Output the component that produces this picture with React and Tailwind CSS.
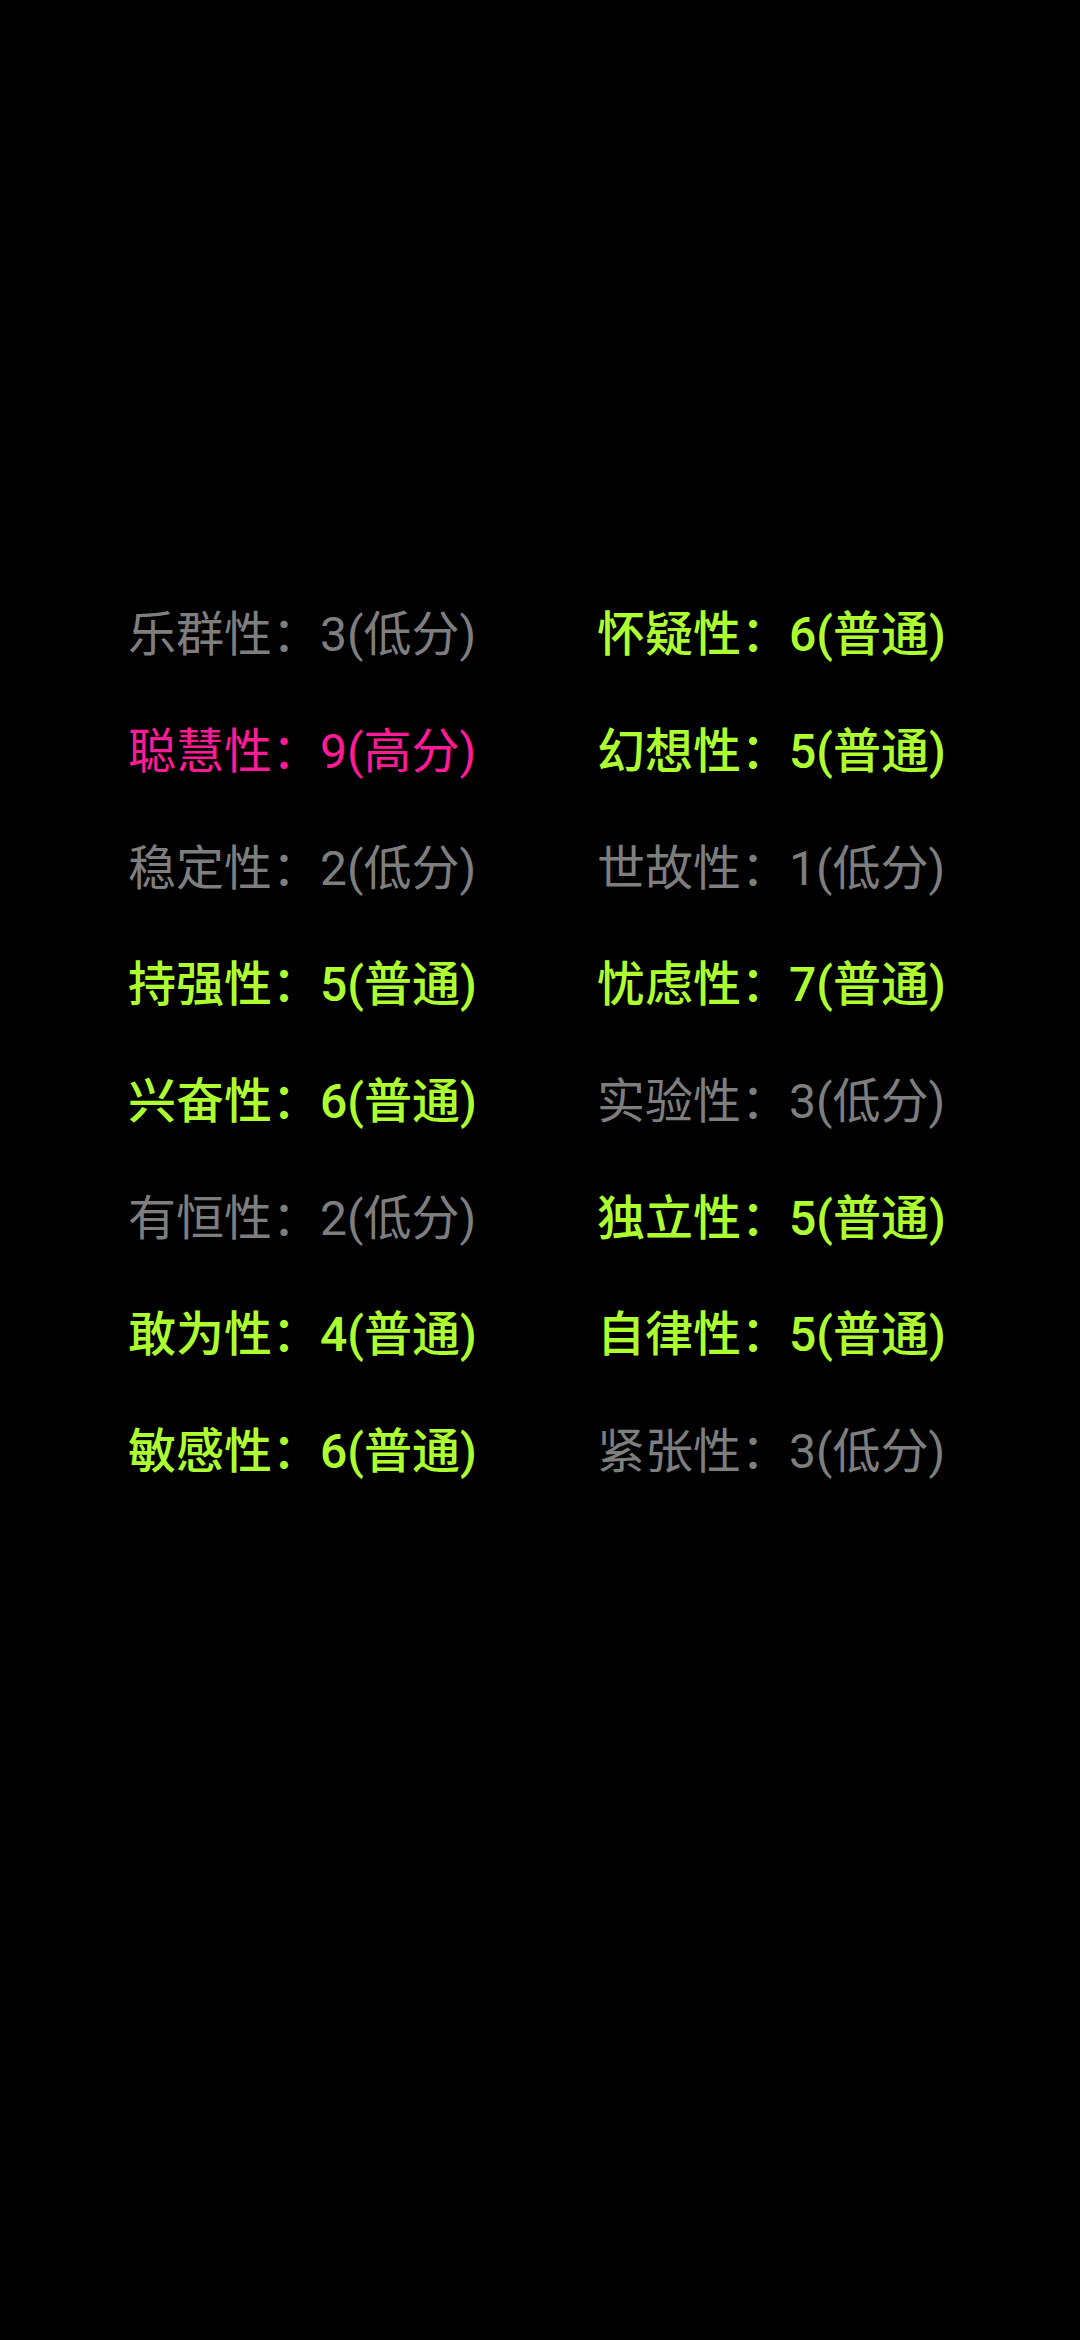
import React from 'react';

// trait scores, two columns
const traits = [
  { name: '乐群性', score: 3, level: '低分' },
  { name: '怀疑性', score: 6, level: '普通' },
  { name: '聪慧性', score: 9, level: '高分' },
  { name: '幻想性', score: 5, level: '普通' },
  { name: '稳定性', score: 2, level: '低分' },
  { name: '世故性', score: 1, level: '低分' },
  { name: '持强性', score: 5, level: '普通' },
  { name: '忧虑性', score: 7, level: '普通' },
  { name: '兴奋性', score: 6, level: '普通' },
  { name: '实验性', score: 3, level: '低分' },
  { name: '有恒性', score: 2, level: '低分' },
  { name: '独立性', score: 5, level: '普通' },
  { name: '敢为性', score: 4, level: '普通' },
  { name: '自律性', score: 5, level: '普通' },
  { name: '敏感性', score: 6, level: '普通' },
  { name: '紧张性', score: 3, level: '低分' },
];

const levelStyle = {
  低分: 'text-[#7e7e7e] font-normal',
  普通: 'text-[#adff2f] font-medium',
  高分: 'text-[#ff1a96] font-normal',
};

export default function App() {
  return (
    <div
      className="w-[1080px] h-[2340px] bg-black pt-[577px]"
      style={{ fontFamily: 'Roboto, "Noto Sans CJK SC", sans-serif' }}
    >
      <div className="grid grid-cols-[469px_1fr] pl-[128px] auto-rows-[116.7px]">
        {traits.map((t) => (
          <div
            key={t.name}
            className={`flex items-center text-[48px] whitespace-nowrap ${levelStyle[t.level]}`}
          >
            {t.name}：{t.score}({t.level})
          </div>
        ))}
      </div>
    </div>
  );
}
